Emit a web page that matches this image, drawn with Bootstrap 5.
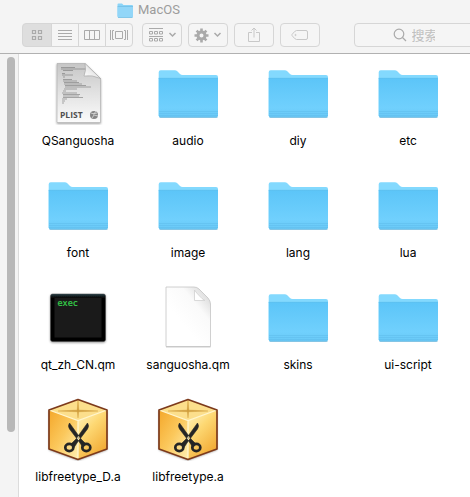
<!DOCTYPE html>
<html lang="en">
<head>
<meta charset="utf-8">
<meta name="viewport" content="width=device-width, initial-scale=1">
<title>MacOS</title>
<link href="https://cdn.jsdelivr.net/npm/bootstrap@5.3.0/dist/css/bootstrap.min.css" rel="stylesheet">
<style>
  body { font-family: Inter, "Noto Sans CJK SC", sans-serif; font-size: 12px; line-height: 16px; color: #000; background: #fff; }
  .finder-bar { background: #f4f4f4; border-bottom: 1px solid #b1b1b1; padding-bottom: 6px; }
  .finder-title { font-family: Roboto, sans-serif; font-size: 13px; font-weight: 400; line-height: 20px; color: #9c9c9c; padding-left: 117px; margin-bottom: 3px; }
  .tools { padding-left: 22px; gap: 6px; }
  .tool { height: 24px; padding: 0; border: 1px solid #d6d6d6; border-radius: 4px; color: #aaa; display: inline-flex; align-items: center; justify-content: center; background: #f5f5f5; }
  .views { margin-right: 3px; }
  .views .tool { width: 28px; }
  .views .tool:first-child { width: 30px; }
  .views .tool.active { background: #dedede; border-color: #d6d6d6; color: #aaa; }
  .tool-wide { width: 40px; }
  .tool-faint { color: #c8c8c8; }
  .search-box { width: 122px; margin-left: 28px; padding-left: 10px; gap: 5px; }
  .search-box input { width: 36px; font-size: 13px; line-height: 20px; color: #888; outline: 0; }
  .search-box input::placeholder { color: #c0c0c0; opacity: 1; }
  .side { width: 19px; background: #f4f4f4; border-right: 1px solid #dcdcdc; padding: 3px 3px 65px 7px; }
  .thumb { width: 8px; background: #b8b8b8; }
  .files { display: grid; grid-template-columns: repeat(auto-fill, 110px); row-gap: 24px; padding: 7px 3px 12px 4px; align-content: start; }
  .file { gap: 8px; color: #000; white-space: nowrap; }
</style>
<script src="https://cdn.jsdelivr.net/npm/bootstrap@5.3.0/dist/js/bootstrap.bundle.min.js"></script>
</head>
<body class="d-flex flex-column min-vh-100">
<svg width="0" height="0" class="position-absolute" aria-hidden="true">
  <defs>
    <linearGradient id="gFolder" x1="0" y1="0" x2="0" y2="1"><stop offset="0" stop-color="#5cc5f8"/><stop offset=".75" stop-color="#70d0fd"/><stop offset="1" stop-color="#69c9f6"/></linearGradient>
    <linearGradient id="gPlist" x1="0" y1="0" x2="0" y2="1"><stop offset="0" stop-color="#c6c6c6"/><stop offset=".5" stop-color="#e2e2e2"/><stop offset="1" stop-color="#fbfbfb"/></linearGradient>
    <linearGradient id="gPage" x1=".35" y1=".6" x2=".9" y2="0"><stop offset="0" stop-color="#fff"/><stop offset=".55" stop-color="#fafafa"/><stop offset="1" stop-color="#d5d5d5"/></linearGradient>
    <linearGradient id="gCurl" x1="0" y1="1" x2=".6" y2=".4"><stop offset="0" stop-color="#fff"/><stop offset="1" stop-color="#e4e4e4"/></linearGradient>
    <linearGradient id="gLeft" x1="0" y1="0" x2="1" y2="1"><stop offset="0" stop-color="#f4a72a"/><stop offset=".5" stop-color="#fbc85c"/><stop offset="1" stop-color="#fff0b4"/></linearGradient>
    <linearGradient id="gRight" x1="0" y1="0" x2=".6" y2="1"><stop offset="0" stop-color="#fff6c8"/><stop offset=".45" stop-color="#fdd873"/><stop offset="1" stop-color="#f2ab35"/></linearGradient>
    <linearGradient id="gExec" x1="0" y1="0" x2="0" y2="1"><stop offset="0" stop-color="#29414a"/><stop offset=".08" stop-color="#050505"/><stop offset="1" stop-color="#000"/></linearGradient>
    <filter id="soft" x="-20%" y="-20%" width="140%" height="140%"><feDropShadow dx="0" dy="1" stdDeviation="1" flood-color="#000" flood-opacity=".4"/></filter>
    <symbol id="folder" viewBox="0 0 64 64">
      <path d="M2.700 55V11.300q0-2 2-2h14q1.600 0 2.600 1l2.700 2.700q1 1 2.700 1H60q2 0 2 2v39z" fill="#83d9fe"/>
      <path d="M2.700 17H62v37.500q0 2-2 2H4.700q-2 0-2-2z" fill="url(#gFolder)"/>
      <path d="M2.700 17.300H62" stroke="#5dbfee" stroke-width=".7"/>
      <path d="M3 50.500h59M3 52.500h59M3 54.500h59" stroke="#5fbbea" stroke-width=".5"/>
      <path d="M3.500 56.300h58" stroke="#5eaed4" stroke-width=".7"/>
    </symbol>
    <symbol id="plist" viewBox="0 0 64 64">
      <path d="M11 2.500h28l15.500 15V61.500H11z" fill="url(#gPlist)" stroke="#aaa" stroke-width=".6" filter="url(#soft)"/>
      <g stroke="#777" stroke-width=".6" fill="none">
        <path d="M15 6.500h14M15 8h25M17 9.500h10M16 12.500h3M16 14h11M17 16h2M17 18.500h9M17 20h14M18 21.500h15M18 23h18M19 24.500h21M19 26h26M18 28h13M17 30h3M16 32h15M17 33.500h17M17 35h16M17 36.500h20M16 38h5M16 40h3M16 42h2"/>
      </g>
      <path d="M39 2.500q1.500 7-1 12.500 8-1.500 16.500 2.500z" fill="url(#gCurl)" stroke="#999" stroke-width=".5"/>
      <text x="14" y="57" font-family="Open Sans, sans-serif" font-size="8.500" font-weight="700" fill="#505050">PLIST</text>
      <circle cx="48" cy="54" r="4" fill="#858585"/><path d="M45 52l3 1 2-3M46 57l2-3 4 1M47 53l4-1" stroke="#ddd" stroke-width=".8" fill="none"/>
    </symbol>
    <symbol id="page" viewBox="0 0 64 64">
      <path d="M10 2h28q3 0 5 2l9 9q2.500 3 2.500 6v42.500H10z" fill="url(#gPage)" stroke="#c4c4c4" stroke-width=".8"/>
      <path d="M38.500 5V15.500H49q-3-1.500-5.500-4.500-3-3-5-6z" fill="#fff" stroke="#d0d0d0" stroke-width=".8"/>
      <path d="M10 62h44.500" stroke="#c0c0c0" stroke-width=".8"/>
    </symbol>
    <symbol id="exec" viewBox="0 0 64 64">
      <rect x="4.500" y="9" width="55" height="47.500" rx="2" fill="url(#gExec)" stroke="#444" stroke-width=".5" filter="url(#soft)"/>
      <rect x="8.500" y="13" width="47" height="39.500" fill="#1a1a1a"/>
      <text x="11.500" y="21" font-family="DejaVu Sans Mono, monospace" font-size="8.500" fill="#36d24c" stroke="#36d24c" stroke-width=".2">exec</text>
    </symbol>
    <symbol id="crate" viewBox="0 0 64 64">
      <path d="M32 2.500L61 13V52L32 62.500 3 52V13z" fill="#f6b440" filter="url(#soft)"/>
      <path d="M3 13l29 10.500v39L3 52z" fill="url(#gLeft)"/>
      <path d="M61 13L32 23.500v39L61 52z" fill="url(#gRight)"/>
      <path d="M32 2.500L61 13 32 23.500 3 13z" fill="#fcdf8c"/>
      <path d="M32 3l.8 10-.8 8-.8-8zM12 14l20-1 20 1-20 .8z" fill="#c9973a" stroke="#d3a23d" stroke-width=".4"/>
      <path d="M3 13l29 10.500L61 13M32 23.500v38" fill="none" stroke="#fff6cf" stroke-width="1.300"/>
      <path d="M32 2.500L61 13V52L32 62.500 3 52V13z" fill="none" stroke="#7d3a1c" stroke-width="1.700" stroke-linejoin="round"/>
      <path d="M23.500 26q-2 3 0 6L33 44.500l4 6 3-3.500-5-5zM41.500 26q2 3 0 6L32 44.500l-4 6-3-3.500 5-5z" fill="#252525" stroke="#252525" stroke-width=".6" stroke-linejoin="round"/>
      <g fill="none" stroke="#252525" stroke-width="2.700"><ellipse cx="23.300" cy="50.500" rx="4" ry="3.600"/><ellipse cx="40.300" cy="50.500" rx="4" ry="3.600"/></g>
      <circle cx="32.300" cy="41" r=".8" fill="#999"/>
    </symbol>
  </defs>
</svg>

<header class="finder-bar overflow-hidden">
  <h1 class="finder-title d-flex align-items-center gap-1">
    <svg width="17" height="16" viewBox="0 0 17 16" aria-hidden="true"><path d="M.5 13V2.500q0-1 1-1H5l1.500 1.500H15q1 0 1 1v10.500H.5z" fill="#8bd4f7"/><path d="M.5 5h15.500v9.500q0 1-1 1H1.500q-1 0-1-1z" fill="#92d6f8"/><path d="M.5 4.500H16M1 15.500h14.500" stroke="#73bfe4" stroke-width=".8"/></svg>
    MacOS
  </h1>
  <div class="tools d-flex align-items-center" role="toolbar" aria-label="Folder view">
    <div class="views btn-group flex-shrink-0" role="group" aria-label="View">
      <button type="button" class="btn tool active" aria-label="Icons"><svg width="12" height="12" fill="none" stroke="currentColor" stroke-width="1.200"><path d="M1.500 1.500h3v3h-3zM7.500 1.500h3v3h-3zM1.500 7.500h3v3h-3zM7.500 7.500h3v3h-3z"/></svg></button>
      <button type="button" class="btn tool" aria-label="List"><svg width="14" height="12" stroke="currentColor"><path d="M0 1.500h14M0 4.500h14M0 7.500h14M0 10.500h14"/></svg></button>
      <button type="button" class="btn tool" aria-label="Columns"><svg width="16" height="12" fill="none" stroke="currentColor"><path d="M.5 1.500h15v9H.5zM5.500 1.500v9M10.500 1.500v9"/></svg></button>
      <button type="button" class="btn tool" aria-label="Cover flow"><svg width="18" height="12" fill="none" stroke="currentColor"><path d="M5.500 2.500h7v7h-7zM.5 1v10M17.500 1v10M4 1.500H2.500v9H4M14 1.500h1.500v9H14"/></svg></button>
    </div>
    <button type="button" class="btn tool tool-wide flex-shrink-0 gap-1" aria-label="Arrange"><svg width="16" height="14" fill="none" stroke="currentColor"><path d="M1 .5h14M1 8.500h14M1.500 3.500h3v2.500h-3zM6.500 3.500h3v2.500h-3zM11.500 3.500h3v2.500h-3zM1.500 10.500h3v2.500h-3zM6.500 10.500h3v2.500h-3zM11.500 10.500h3v2.500h-3z"/></svg><svg width="9" height="6" fill="none" stroke="currentColor" stroke-width="1.500"><path d="M1.500 1l3 3 3-3"/></svg></button>
    <button type="button" class="btn tool tool-wide flex-shrink-0 gap-1" aria-label="Actions"><svg width="15" height="15" viewBox="-7.500 -7.500 15 15" fill="none" stroke="currentColor"><circle r="3.500" stroke-width="3"/><path stroke-width="2.600" d="M0-7v3M0 7V4M-7 0h3M7 0H4M-4.900-4.900l2 2M4.900 4.900l-2-2M4.900-4.900l-2 2M-4.900 4.900l2-2"/></svg><svg width="9" height="6" fill="none" stroke="currentColor" stroke-width="1.500"><path d="M1.500 1l3 3 3-3"/></svg></button>
    <button type="button" class="btn tool tool-wide tool-faint flex-shrink-0" aria-label="Share"><svg width="12" height="16" fill="none" stroke="currentColor"><path d="M4 5.500H.5v9h11v-9H8M6 10.500V1M3.500 3.500L6 1l2.500 2.500"/></svg></button>
    <button type="button" class="btn tool tool-wide tool-faint flex-shrink-0" aria-label="Tags"><svg width="18" height="12" fill="none" stroke="currentColor"><path d="M5.500 1.500H15q1.500 0 1.500 1.500v6q0 1.500-1.500 1.500H5.500Q4 10.500 1 6.500v-1Q4 1.500 5.500 1.500z"/><circle cx="4.500" cy="6" r=".6"/></svg></button>
    <label class="tool search-box flex-shrink-0"><svg width="14" height="14" fill="none" stroke="currentColor" stroke-width="1.200" aria-hidden="true"><circle cx="6" cy="6" r="4.800"/><path d="M9.500 9.500L13 13"/></svg><input type="search" class="border-0 bg-transparent p-0" placeholder="搜索" aria-label="搜索"></label>
  </div>
</header>

<div class="d-flex flex-grow-1">
  <aside class="side flex-shrink-0 d-flex" aria-label="Sidebar"><div class="thumb rounded-pill"></div></aside>
  <main class="files flex-grow-1">
    <a href="#" class="file d-flex flex-column align-items-center text-decoration-none"><svg width="64" height="64"><use href="#plist"/></svg><span>QSanguosha</span></a>
    <a href="#" class="file d-flex flex-column align-items-center text-decoration-none"><svg width="64" height="64"><use href="#folder"/></svg><span>audio</span></a>
    <a href="#" class="file d-flex flex-column align-items-center text-decoration-none"><svg width="64" height="64"><use href="#folder"/></svg><span>diy</span></a>
    <a href="#" class="file d-flex flex-column align-items-center text-decoration-none"><svg width="64" height="64"><use href="#folder"/></svg><span>etc</span></a>
    <a href="#" class="file d-flex flex-column align-items-center text-decoration-none"><svg width="64" height="64"><use href="#folder"/></svg><span>font</span></a>
    <a href="#" class="file d-flex flex-column align-items-center text-decoration-none"><svg width="64" height="64"><use href="#folder"/></svg><span>image</span></a>
    <a href="#" class="file d-flex flex-column align-items-center text-decoration-none"><svg width="64" height="64"><use href="#folder"/></svg><span>lang</span></a>
    <a href="#" class="file d-flex flex-column align-items-center text-decoration-none"><svg width="64" height="64"><use href="#folder"/></svg><span>lua</span></a>
    <a href="#" class="file d-flex flex-column align-items-center text-decoration-none"><svg width="64" height="64"><use href="#exec"/></svg><span>qt_zh_CN.qm</span></a>
    <a href="#" class="file d-flex flex-column align-items-center text-decoration-none"><svg width="64" height="64"><use href="#page"/></svg><span>sanguosha.qm</span></a>
    <a href="#" class="file d-flex flex-column align-items-center text-decoration-none"><svg width="64" height="64"><use href="#folder"/></svg><span>skins</span></a>
    <a href="#" class="file d-flex flex-column align-items-center text-decoration-none"><svg width="64" height="64"><use href="#folder"/></svg><span>ui-script</span></a>
    <a href="#" class="file d-flex flex-column align-items-center text-decoration-none"><svg width="64" height="64"><use href="#crate"/></svg><span>libfreetype_D.a</span></a>
    <a href="#" class="file d-flex flex-column align-items-center text-decoration-none"><svg width="64" height="64"><use href="#crate"/></svg><span>libfreetype.a</span></a>
  </main>
</div>
</body>
</html>
